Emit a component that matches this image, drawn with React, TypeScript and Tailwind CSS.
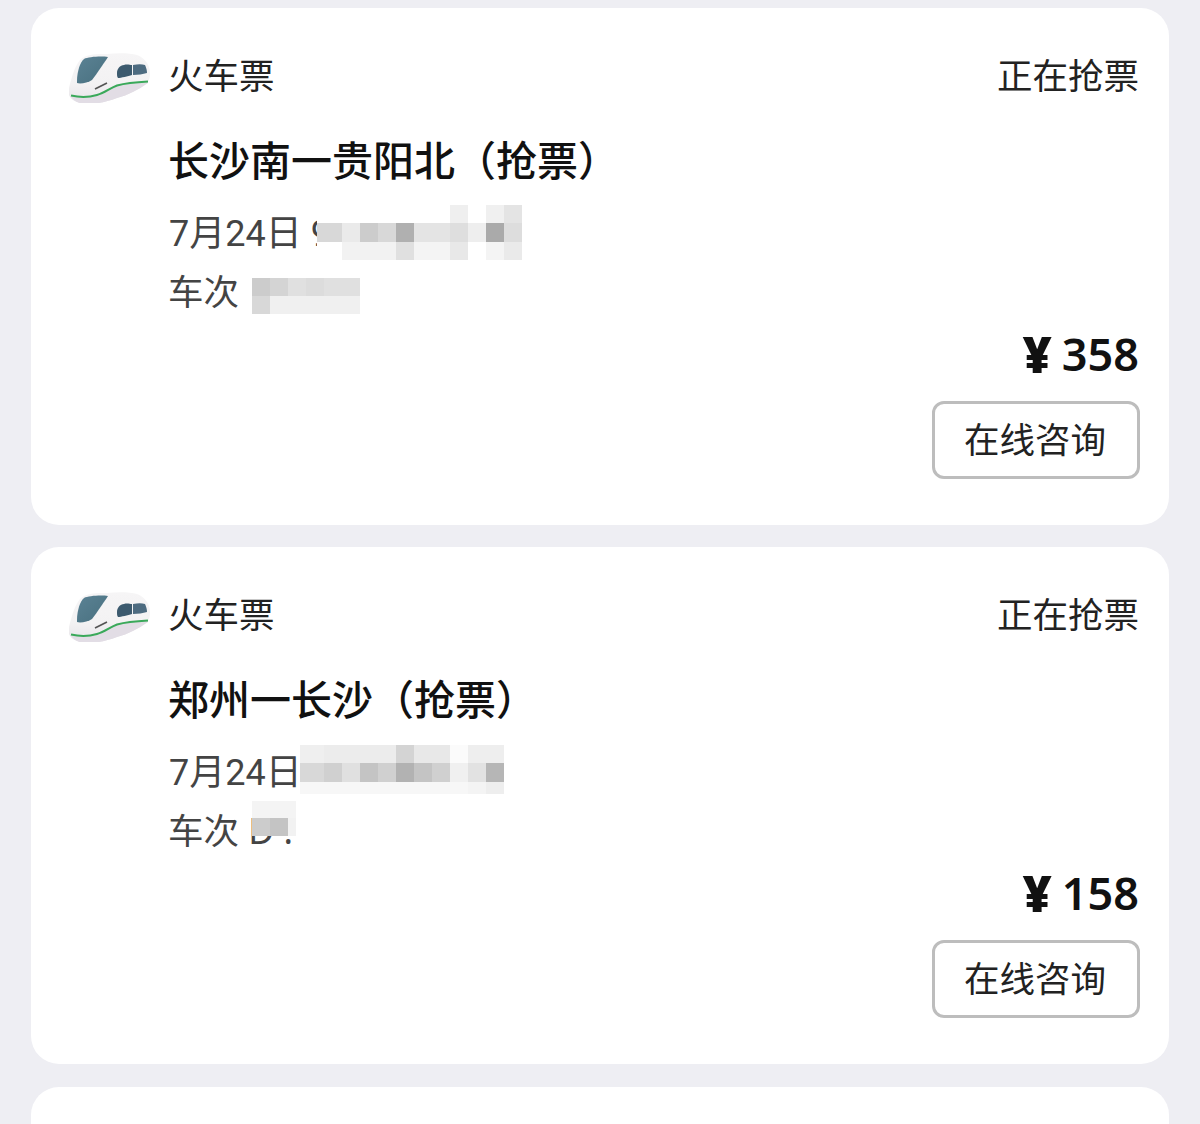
const CJK = '"Noto Sans", "Noto Sans CJK SC", sans-serif';

type Cell = [number, number, number, number, string];

function TrainIcon({ id }: { id: string }) {
  return (
    <svg width="84" height="56" viewBox="0 -5 84 56" className="shrink-0 blur-[0.6px]">
      <defs>
        <linearGradient id={`${id}-body`} x1="0" y1="0" x2="0" y2="1">
          <stop offset="0" stopColor="#f6f5f6" />
          <stop offset="0.6" stopColor="#f3f2f3" />
          <stop offset="1" stopColor="#e6e3e8" />
        </linearGradient>
        <linearGradient id={`${id}-glass`} x1="0" y1="0" x2="1" y2="1">
          <stop offset="0" stopColor="#5b8294" />
          <stop offset="1" stopColor="#48707f" />
        </linearGradient>
      </defs>
      <path d="M1 36 C4 24 7 14 12 8 C18 2 28 2 39 2 C50 1 62 1 69 3 C77 6 82 13 82 21 C82 26 81 29 79 31 C70 38 60 43 49 46 C38 50 28 52 19 52 C10 52 3 48 1 43Z" fill={`url(#${id}-body)`} />
      <path d="M3 44 C12 46 22 45 29 43 C37 41 42 36 49 33.5 C58 31 70 30 80 29.5 L80 31 C70 38 60 43 49 46 C38 50 28 52 19 52 C10 52 5 48 3 44Z" fill="#e2dde5" />
      <path d="M3 43.5 C12 45.5 22 45 29 43 C37 41 42 36 49 33.5 C58 31 70 30 80 29.5" fill="none" stroke="#3aa95a" strokeWidth="2" />
      <path d="M9 29 C9 20 12 10 16 7 C20 5 32 4 40 5 C36 11 30 20 24 28 C20 31 12 32 9 31Z" fill={`url(#${id}-glass)`} />
      <path d="M49 21 C49 17 52 13 56 13 C59 12 62 13 64 13 L64 23 C60 24 53 26 50 26 C49 25 49 23 49 21Z" fill="#3c5a6e" />
      <path d="M65 13 C70 12 74 12 77 13 C78 15 79 18 79 21 C75 22 70 23 65 23Z" fill="#4d6b80" />
      <path d="M27 37 C31 35 35 33 39 31" fill="none" stroke="#555" strokeWidth="1.6" />
    </svg>
  );
}

// mosaic that covers the private parts of the order lines
function Mosaic({ cells }: { cells: Cell[] }) {
  return (
    <svg width="480" height="70" className="absolute top-0 left-0 blur-[0.4px]">
      {cells.map(([x, y, w, h, fill], i) => (
        <rect key={i} x={x} y={y} width={w} height={h} fill={fill} />
      ))}
    </svg>
  );
}

const dateA: Cell[] = [
  [149, 0, 25, 18, '#ffffff'],
  [149, 37, 25, 18, '#ffffff'],
  [149, 18, 25, 19, '#d8d8d8'],
  [174, 18, 18, 19, '#eaeaea'],
  [192, 18, 18, 19, '#cccccc'],
  [210, 18, 18, 19, '#d8d8d8'],
  [228, 18, 18, 19, '#b0b0b0'],
  [246, 18, 36, 19, '#e4e4e4'],
  [282, 18, 18, 19, '#dedede'],
  [300, 18, 18, 19, '#eeeeee'],
  [318, 18, 18, 19, '#aaaaaa'],
  [336, 18, 18, 19, '#dddddd'],
  [174, 37, 54, 18, '#f2f2f2'],
  [228, 37, 18, 18, '#e0e0e0'],
  [246, 37, 36, 18, '#f4f4f4'],
  [282, 37, 18, 18, '#e8e8e8'],
  [318, 37, 18, 18, '#f4f4f4'],
  [336, 37, 18, 18, '#eaeaea'],
  [282, 0, 18, 18, '#efefef'],
  [318, 0, 18, 18, '#f0f0f0'],
  [336, 0, 18, 18, '#e4e4e4'],
];

const trainA: Cell[] = [
  [73, 2, 120, 14, '#ffffff'],
  [84, 16, 18, 18, '#cccccc'],
  [102, 16, 18, 18, '#d4d4d4'],
  [120, 16, 18, 18, '#e0e0e0'],
  [138, 16, 18, 18, '#dcdcdc'],
  [156, 16, 36, 18, '#e0e0e0'],
  [84, 34, 18, 18, '#d8d8d8'],
  [102, 34, 90, 18, '#f0f0f0'],
];

const dateB: Cell[] = [
  [132, 1, 24, 18, '#efefef'],
  [156, 1, 72, 18, '#ececec'],
  [228, 1, 18, 18, '#d4d4d4'],
  [246, 1, 36, 18, '#e8e8e8'],
  [282, 1, 18, 18, '#fbfbfb'],
  [300, 1, 36, 18, '#eeeeee'],
  [132, 19, 24, 19, '#d8d8d8'],
  [156, 19, 18, 19, '#d0d0d0'],
  [174, 19, 18, 19, '#e0e0e0'],
  [192, 19, 18, 19, '#c4c4c4'],
  [210, 19, 18, 19, '#d0d0d0'],
  [228, 19, 18, 19, '#b2b2b2'],
  [246, 19, 18, 19, '#c4c4c4'],
  [264, 19, 18, 19, '#d0d0d0'],
  [282, 19, 18, 19, '#f0f0f0'],
  [300, 19, 18, 19, '#e2e2e2'],
  [318, 19, 18, 19, '#b6b6b6'],
  [132, 38, 168, 12, '#f7f7f7'],
  [300, 38, 18, 12, '#f4f4f4'],
  [318, 38, 18, 12, '#eeeeee'],
];

const trainB: Cell[] = [
  [84, 0, 44, 17, '#f4f4f4'],
  [84, 17, 18, 18, '#cccccc'],
  [102, 17, 18, 18, '#c4c4c4'],
  [120, 17, 8, 18, '#f2f2f2'],
];

function OrderCard({
  id,
  title,
  price,
  dateText,
  dateCells,
  trainText,
  trainCells,
}: {
  id: string;
  title: string;
  price: string;
  dateText: string;
  dateCells: Cell[];
  trainText: string;
  trainCells: Cell[];
}) {
  return (
    <article className="h-[517px] shrink-0 rounded-[28px] bg-white pl-[37px] pr-[29px] pt-[39px]">
      <header className="flex h-[56px] items-center">
        <TrainIcon id={id} />
        <span className="ml-[16px] text-[35.5px] leading-[58px] text-[#222]">火车票</span>
        <span className="mr-[1px] ml-auto text-[35.5px] leading-[56px] text-[#222]">正在抢票</span>
      </header>
      <div className="pl-[100px]">
        <h2 className="mt-[27px] text-[41px] leading-[60px] font-medium text-[#111]">{title}</h2>
        <div className="relative mt-[15px] h-[57px] pl-[1px] text-[36px] leading-[58px] text-[#444] font-['Roboto','Noto_Sans_CJK_SC',sans-serif]">
          {dateText}
          <Mosaic cells={dateCells} />
        </div>
        <div className="relative h-[58px] text-[35.5px] leading-[58px] text-[#444]">
          {trainText}
          <Mosaic cells={trainCells} />
        </div>
      </div>
      <div className="mt-[4px] flex flex-col items-end">
        <p className="mr-[1px] flex h-[60px] items-center gap-[10px] text-[45px] leading-[60px] font-semibold text-[#111]">
          <span className="text-[50px] leading-none font-black">¥</span>
          <span>{price}</span>
        </p>
        <button type="button" className="mt-[17px] h-[78px] w-[208px] rounded-[12px] border-[3px] border-[#bdbdbd] pr-[2px] text-[35.5px] text-[#222]">
          在线咨询
        </button>
      </div>
    </article>
  );
}

export default function App() {
  return (
    <div className="flex h-[1124px] flex-col gap-[22px] overflow-hidden bg-[#eeeef3] px-[31px] pt-[8px]" style={{ fontFamily: CJK }}>
      <OrderCard
        id="a"
        title="长沙南一贵阳北（抢票）"
        price="358"
        dateText="7月24日 9"
        dateCells={dateA}
        trainText="车次"
        trainCells={trainA}
      />
      <OrderCard
        id="b"
        title="郑州一长沙（抢票）"
        price="158"
        dateText="7月24日"
        dateCells={dateB}
        trainText="车次 D ."
        trainCells={trainB}
      />
      <article className="mt-[1px] h-[100px] shrink-0 rounded-[28px] bg-white" />
    </div>
  );
}
